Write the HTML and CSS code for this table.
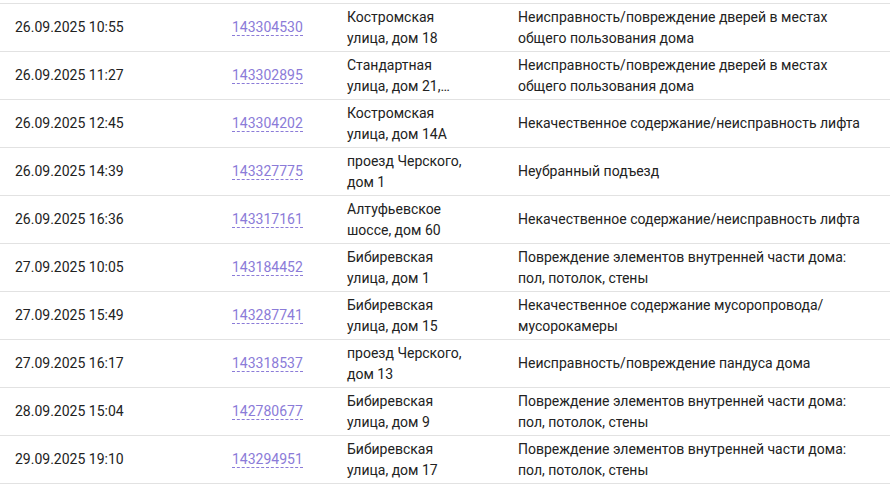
FILE: index.html
```html
<!DOCTYPE html>
<html lang="ru">
<head>
<meta charset="utf-8">
<title>Обращения</title>
<link rel="stylesheet" href="styles.css">
</head>
<body>
<div class="list">
  <div class="row"><div class="c-date">26.09.2025 10:55</div><div class="c-num"><a class="num">143304530</a></div><div class="c-addr">Костромская улица, дом 18</div><div class="c-desc">Неисправность/повреждение дверей в местах общего пользования дома</div></div>
  <div class="row"><div class="c-date">26.09.2025 11:27</div><div class="c-num"><a class="num">143302895</a></div><div class="c-addr">Стандартная улица, дом 21,…</div><div class="c-desc">Неисправность/повреждение дверей в местах общего пользования дома</div></div>
  <div class="row"><div class="c-date">26.09.2025 12:45</div><div class="c-num"><a class="num">143304202</a></div><div class="c-addr">Костромская улица, дом 14А</div><div class="c-desc">Некачественное содержание/неисправность лифта</div></div>
  <div class="row"><div class="c-date">26.09.2025 14:39</div><div class="c-num"><a class="num">143327775</a></div><div class="c-addr">проезд Черского, дом 1</div><div class="c-desc">Неубранный подъезд</div></div>
  <div class="row"><div class="c-date">26.09.2025 16:36</div><div class="c-num"><a class="num">143317161</a></div><div class="c-addr">Алтуфьевское шоссе, дом 60</div><div class="c-desc">Некачественное содержание/неисправность лифта</div></div>
  <div class="row"><div class="c-date">27.09.2025 10:05</div><div class="c-num"><a class="num">143184452</a></div><div class="c-addr">Бибиревская улица, дом 1</div><div class="c-desc">Повреждение элементов внутренней части дома: пол, потолок, стены</div></div>
  <div class="row"><div class="c-date">27.09.2025 15:49</div><div class="c-num"><a class="num">143287741</a></div><div class="c-addr">Бибиревская улица, дом 15</div><div class="c-desc">Некачественное содержание мусоропровода/<wbr>мусорокамеры</div></div>
  <div class="row"><div class="c-date">27.09.2025 16:17</div><div class="c-num"><a class="num">143318537</a></div><div class="c-addr">проезд Черского, дом 13</div><div class="c-desc">Неисправность/повреждение пандуса дома</div></div>
  <div class="row"><div class="c-date">28.09.2025 15:04</div><div class="c-num"><a class="num">142780677</a></div><div class="c-addr">Бибиревская улица, дом 9</div><div class="c-desc">Повреждение элементов внутренней части дома: пол, потолок, стены</div></div>
  <div class="row"><div class="c-date">29.09.2025 19:10</div><div class="c-num"><a class="num">143294951</a></div><div class="c-addr">Бибиревская улица, дом 17</div><div class="c-desc">Повреждение элементов внутренней части дома: пол, потолок, стены</div></div>
</div>
</body>
</html>
```
FILE: styles.css
```css
html, body {
  margin: 0;
  padding: 0;
  background: #ffffff;
}
body {
  font-family: Roboto, "Liberation Sans", sans-serif;
  font-size: 14px;
  line-height: 21px;
  color: #222222;
  padding-top: 3px;
}
.list {
  width: 890px;
  border-bottom: 1px solid #e2e2e2;
}
.row {
  display: grid;
  grid-template-columns: 232px 115px 171px 1fr;
  align-items: center;
  box-sizing: border-box;
  height: 48px;
  border-top: 1px solid #e2e2e2;
}
.c-date {
  padding-left: 15px;
}
.c-addr {
  padding-right: 46px;
}
.c-desc {
  padding-right: 22px;
}
.num {
  color: #8b7bd8;
  text-decoration: none;
  border-bottom: 1px dashed #8b7bd8;
  cursor: pointer;
}
```
